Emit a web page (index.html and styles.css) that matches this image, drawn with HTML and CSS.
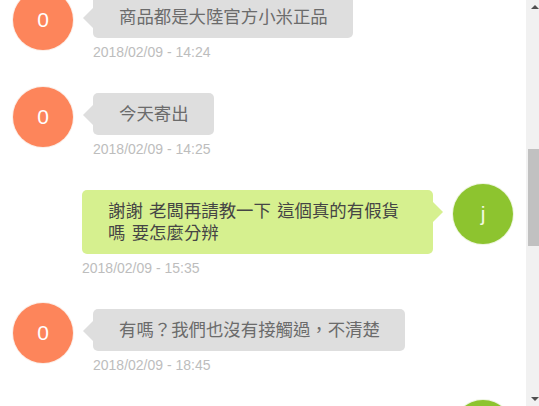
FILE: index.html
```html
<!DOCTYPE html>
<html lang="zh-Hant">
<head>
  <meta charset="UTF-8" />
  <meta name="viewport" content="width=device-width, initial-scale=1.0">
  <title>聊天記錄</title>
  <link rel="stylesheet" href="styles.css">
</head>
<body>

  <!-- 對話內容 -->
  <div class="chat">
    <div class="chat-list">

      <div class="msg">
        <div class="avatar shop">0</div>
        <div class="msg-body">
          <div class="bubble">商品都是大陸官方小米正品</div>
          <div class="time">2018/02/09 - 14:24</div>
        </div>
      </div>

      <div class="msg">
        <div class="avatar shop">0</div>
        <div class="msg-body">
          <div class="bubble">今天寄出</div>
          <div class="time">2018/02/09 - 14:25</div>
        </div>
      </div>

      <div class="msg mine">
        <div class="avatar buyer">j</div>
        <div class="msg-body">
          <div class="bubble">謝謝 老闆再請教一下 這個真的有假貨嗎 要怎麼分辨</div>
          <div class="time">2018/02/09 - 15:35</div>
        </div>
      </div>

      <div class="msg">
        <div class="avatar shop">0</div>
        <div class="msg-body">
          <div class="bubble">有嗎？我們也沒有接觸過，不清楚</div>
          <div class="time">2018/02/09 - 18:45</div>
        </div>
      </div>

      <div class="msg mine">
        <div class="avatar buyer">j</div>
        <div class="msg-body">
          <div class="bubble">好的 謝謝</div>
          <div class="time">2018/02/09 - 19:02</div>
        </div>
      </div>

    </div>
  </div>

  <!-- 捲軸 -->
  <div class="scrollbar">
    <div class="sb-btn up"></div>
    <div class="sb-track">
      <div class="sb-thumb" style="margin-top: 132px; height: 97px;"></div>
    </div>
    <div class="sb-btn down"></div>
  </div>

</body>
</html>
```

FILE: styles.css
```css
body {
  margin: 0;
  height: 406px;
  display: flex;
  overflow: hidden;
  background: #fff;
  font-family: "Liberation Sans", "Noto Sans CJK TC", sans-serif;
}

.chat {
  width: 526px;
  flex-shrink: 0;
  overflow: hidden;
}

.chat-list {
  margin-top: -10px;
  display: flex;
  flex-direction: column;
  gap: 27px;
}

.msg {
  display: flex;
  align-items: flex-start;
  gap: 20px;
  padding: 0 13px;
}

.msg.mine {
  flex-direction: row-reverse;
}

.avatar {
  width: 60px;
  height: 60px;
  border-radius: 50%;
  flex-shrink: 0;
  display: flex;
  align-items: center;
  justify-content: center;
  color: #fff;
  font-size: 21px;
  box-shadow: 0 0 0 1px #fbeee8;
}

.avatar.shop {
  background: #fd855b;
}

.avatar.buyer {
  background: #8dc42f;
  color: #f4fae4;
  box-shadow: 0 0 0 1px #eef5e0;
}

.msg-body {
  display: flex;
  flex-direction: column;
  align-items: flex-start;
  padding-top: 6px;
}

.bubble {
  position: relative;
  box-sizing: border-box;
  max-width: 351px;
  padding: 10px 25px 10px 26px;
  border-radius: 5px;
  background: #dedede;
  color: #6b6b6b;
  font-family: "Liberation Sans", "Noto Sans CJK TC", sans-serif;
  font-size: 17.4px;
  line-height: 22px;
  word-spacing: 1.5px;
}

/* 對話框的小箭頭 */
.bubble::before {
  content: "";
  position: absolute;
  top: 12px;
  left: -10px;
  border-top: 10px solid transparent;
  border-bottom: 10px solid transparent;
  border-right: 10px solid #dedede;
}

.mine .bubble {
  background: #d6f08f;
  color: #454545;
}

.mine .bubble::before {
  left: auto;
  right: -10px;
  border-right: none;
  border-left: 10px solid #d6f08f;
}

.time {
  margin-top: 6px;
  font-size: 14px;
  line-height: 16px;
  color: #bdbdbd;
}

/* 捲軸 */
.scrollbar {
  width: 17px;
  flex-shrink: 0;
  display: flex;
  flex-direction: column;
  background: #f1f1f1;
}

.sb-btn {
  height: 17px;
  display: flex;
  align-items: center;
  justify-content: center;
}

.sb-btn::before {
  content: "";
  border-left: 4px solid transparent;
  border-right: 4px solid transparent;
}

.sb-btn.up::before {
  border-bottom: 4px solid #505050;
  margin-top: -3px;
}

.sb-btn.down::before {
  border-top: 4px solid #505050;
  margin-top: 3px;
}

.sb-track {
  flex: 1;
}

.sb-thumb {
  margin-left: 2px;
  width: 13px;
  background: #c1c1c1;
}
```
